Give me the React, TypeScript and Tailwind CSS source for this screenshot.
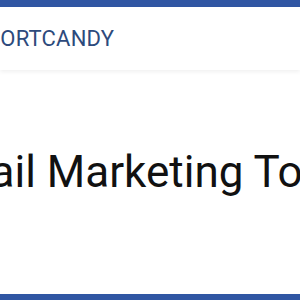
export default function App() {
  return (
    <div className="w-[300px] h-[300px] overflow-hidden bg-white flex flex-col font-['Roboto',sans-serif]">
      <div className="h-[7px] bg-[#3056a3] shrink-0" />
      <header className="h-[63px] shrink-0 bg-white flex items-center overflow-hidden shadow-[0_2px_4px_rgba(0,0,0,0.06)] relative z-10">
        <span className="whitespace-nowrap text-[22px] text-[#2d4a7c] tracking-[0.2px] -ml-[27px] -mt-[1px]">
          SPORTCANDY
        </span>
      </header>
      <main className="flex-1 bg-white flex items-start overflow-hidden pt-[80px]">
        <h1 className="whitespace-nowrap text-[44px] leading-[44px] text-[#111] -ml-[73px]">
          Email Marketing Tools
        </h1>
      </main>
      <div className="h-[6px] bg-[#3056a3] shrink-0" />
    </div>
  );
}
